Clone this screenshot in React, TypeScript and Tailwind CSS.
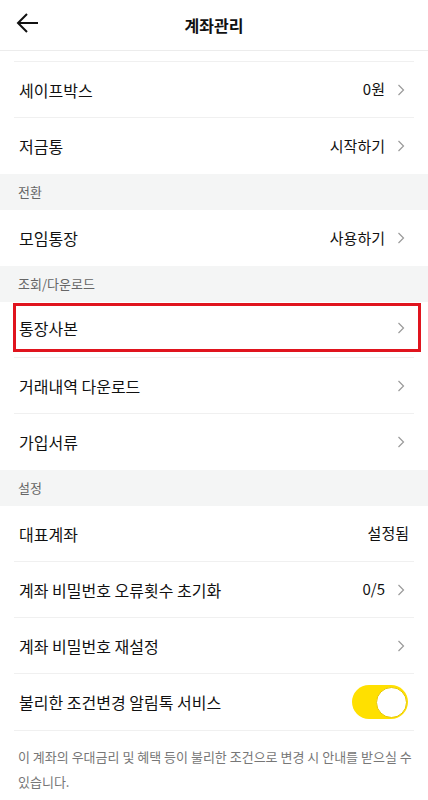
const font = { fontFamily: '"Noto Sans CJK KR", "Noto Sans", sans-serif' };

type Row = { label: string; value?: string; chevron?: boolean; last?: boolean };

function Chevron() {
  return (
    <svg width="8" height="12" viewBox="0 0 8 12" fill="none" stroke="#9a9a9a" strokeWidth="1.2" className="ml-[12px]">
      <path d="M1.5 1l5 5-5 5" />
    </svg>
  );
}

function ListRow({ label, value, chevron = true, last }: Row) {
  return (
    <div className="px-[14px]">
      <div
        className={
          "flex h-[56px] items-center justify-between pl-[5px] " + (last ? "" : "border-b border-[#f0f0f0]")
        }
      >
        <span className="text-[16px] text-[#111]">{label}</span>
        <div className="flex items-center pr-[9px]">
          {value && <span className="text-[15px] text-[#111]">{value}</span>}
          {chevron && <Chevron />}
        </div>
      </div>
    </div>
  );
}

function Section({ title }: { title: string }) {
  return (
    <div className="flex h-[36px] items-center bg-[#f4f5f5] px-[18px] text-[13px] text-[#666]">{title}</div>
  );
}

export default function App() {
  return (
    <div className="min-h-[800px] w-full bg-white" style={font}>
      <header className="relative flex h-[51px] items-center justify-center border-b border-[#ececec]">
        <button type="button" aria-label="back" className="absolute left-[16px] top-[12px]">
          <svg width="24" height="22" viewBox="0 0 24 22" fill="none" stroke="#111" strokeWidth="2">
            <path d="M22 11H3M11 2l-9 9 9 9" />
          </svg>
        </button>
        <h1 className="text-[16px] font-bold text-[#111]">계좌관리</h1>
      </header>

      <div className="mx-[14px] h-[11px] border-b border-[#f0f0f0]" />
      <ListRow label="세이프박스" value="0원" />
      <ListRow label="저금통" value="시작하기" last />

      <Section title="전환" />
      <ListRow label="모임통장" value="사용하기" last />

      <Section title="조회/다운로드" />
      <div className="px-[14px]">
        <div className="flex h-[56px] items-center border-b border-[#f0f0f0]">
          <div className="-ml-px -mr-[7px] mb-[4px] flex h-[49px] flex-1 items-center justify-between border-[3px] border-[#e0141e] pl-[3px] pr-[13px]">
            <span className="text-[16px] text-[#111]">통장사본</span>
            <Chevron />
          </div>
        </div>
      </div>
      <ListRow label="거래내역 다운로드" />
      <ListRow label="가입서류" last />

      <Section title="설정" />
      <div className="px-[14px]">
        <div className="flex h-[56px] items-center justify-between border-b border-[#f0f0f0] pl-[5px]">
          <span className="text-[16px] text-[#111]">대표계좌</span>
          <span className="pr-[5px] text-[15px] text-[#111]">설정됨</span>
        </div>
      </div>
      <ListRow label="계좌 비밀번호 오류횟수 초기화" value="0/5" />
      <ListRow label="계좌 비밀번호 재설정" />
      <div className="px-[14px]">
        <div className="flex h-[57px] items-center justify-between border-b border-[#f0f0f0] pl-[5px] pr-[6px]">
          <span className="text-[16px] text-[#111]">불리한 조건변경 알림톡 서비스</span>
          <div className="flex h-[34px] w-[56px] items-center justify-end rounded-full bg-[#ffe000] pr-[1px]">
            <div className="h-[31px] w-[31px] rounded-full border-[1.5px] border-[#e8c800] bg-white" />
          </div>
        </div>
      </div>
      <p className="pl-[18px] pr-[6px] pt-[13px] text-[13px] leading-[25px] text-[#777]">
        이 계좌의 우대금리 및 혜택 등이 불리한 조건으로 변경 시 안내를 받으실 수 있습니다.
      </p>
    </div>
  );
}
